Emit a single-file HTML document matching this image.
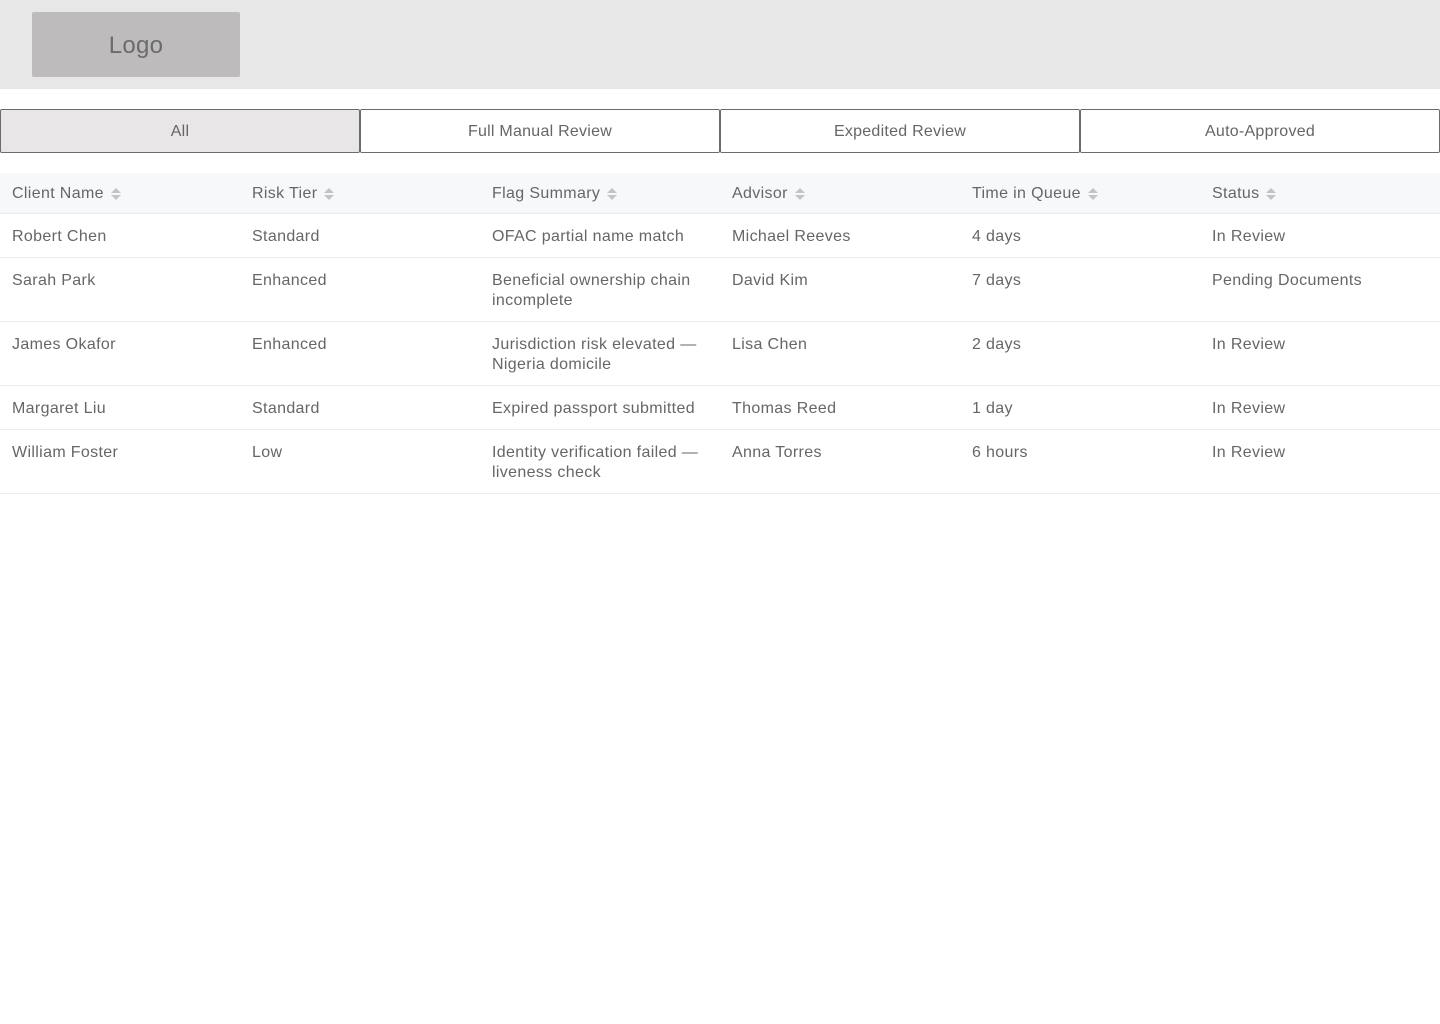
<!DOCTYPE html>
<html><head><meta charset="utf-8"><style>
*{box-sizing:border-box;margin:0;padding:0}
body{width:1440px;height:1024px;background:#fff;font-family:"Liberation Sans",Arial,sans-serif;color:#666;position:relative;overflow:hidden}
.hdr{position:absolute;left:0;top:0;width:1440px;height:89px;background:#e7e7e7}
.logo{position:absolute;left:32px;top:12px;width:208px;height:65px;background:#bdbbbc;border-radius:2px;color:#6b6b6b;font-size:24px;letter-spacing:0.3px;display:flex;align-items:center;justify-content:center;padding-top:2px}
.tabs{position:absolute;top:109px;left:0;width:1440px;height:44px;display:flex}
.tab{width:360px;height:44px;border:1px solid #6b6b6b;border-radius:2px;display:flex;align-items:center;justify-content:center;font-size:16px;letter-spacing:0.25px;color:#666;background:#fff;padding-top:1px}
.tab.on{background:#e8e6e7}
table{position:absolute;top:173px;left:0;width:1440px;border-collapse:collapse;font-size:16px;letter-spacing:0.35px}
th{height:40px;background:#f7f8fa;text-align:left;font-weight:normal;padding:3px 12px 0;border-bottom:1px solid #eaebef;color:#666;width:240px}
td{vertical-align:top;padding:13px 12px 10px;line-height:20px;border-bottom:1px solid #eaebef;width:240px}
.s{display:inline-block;vertical-align:middle;margin-left:7px;width:10px;height:14px;position:relative}
.s:before,.s:after{content:"";position:absolute;left:0;border-left:5px solid transparent;border-right:5px solid transparent}
.s:before{top:1px;border-bottom:5px solid #c4c4c8}
.s:after{top:8px;border-top:5px solid #c4c4c8}
</style></head><body>
<div class="hdr"><div class="logo">Logo</div></div>
<div class="tabs"><div class="tab on">All</div><div class="tab">Full Manual Review</div><div class="tab">Expedited Review</div><div class="tab">Auto-Approved</div></div>
<table>
<tr><th>Client Name<span class="s"></span></th><th>Risk Tier<span class="s"></span></th><th>Flag Summary<span class="s"></span></th><th>Advisor<span class="s"></span></th><th>Time in Queue<span class="s"></span></th><th>Status<span class="s"></span></th></tr>
<tr><td>Robert Chen</td><td>Standard</td><td>OFAC partial name match</td><td>Michael Reeves</td><td>4 days</td><td>In Review</td></tr>
<tr><td>Sarah Park</td><td>Enhanced</td><td>Beneficial ownership chain incomplete</td><td>David Kim</td><td>7 days</td><td>Pending Documents</td></tr>
<tr><td>James Okafor</td><td>Enhanced</td><td>Jurisdiction risk elevated — Nigeria domicile</td><td>Lisa Chen</td><td>2 days</td><td>In Review</td></tr>
<tr><td>Margaret Liu</td><td>Standard</td><td>Expired passport submitted</td><td>Thomas Reed</td><td>1 day</td><td>In Review</td></tr>
<tr><td>William Foster</td><td>Low</td><td>Identity verification failed — liveness check</td><td>Anna Torres</td><td>6 hours</td><td>In Review</td></tr>
</table>
</body></html>
